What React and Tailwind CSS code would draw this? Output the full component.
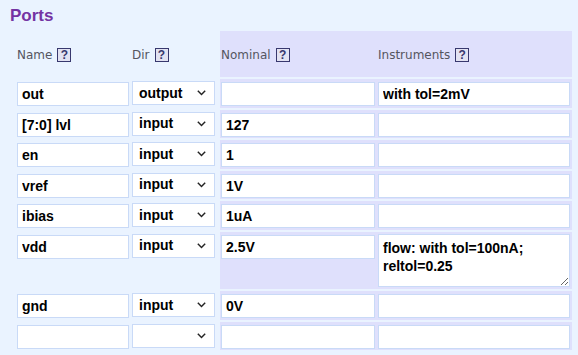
import React from "react";

const ports = [
  { name: "out", dir: "output", nominal: "", inst: "with tol=2mV" },
  { name: "[7:0] lvl", dir: "input", nominal: "127", inst: "" },
  { name: "en", dir: "input", nominal: "1", inst: "" },
  { name: "vref", dir: "input", nominal: "1V", inst: "" },
  { name: "ibias", dir: "input", nominal: "1uA", inst: "" },
  { name: "vdd", dir: "input", nominal: "2.5V", inst: "flow: with tol=100nA;\nreltol=0.25", tall: true },
  { name: "gnd", dir: "input", nominal: "0V", inst: "" },
  { name: "", dir: "", nominal: "", inst: "" },
];

const field =
  "h-[24px] border border-[#c9daf7] bg-white px-[4px] text-[14px] font-bold text-black outline-none font-['Liberation_Sans',Arial,sans-serif]";

function Help() {
  return (
    <span className="ml-[5px] inline-flex h-[14px] w-[14px] items-center justify-center border-[1.5px] border-[#38386e] bg-[#e2e2f2] text-[12px] leading-none font-bold text-[#38386e] font-['Liberation_Sans',Arial,sans-serif]">
      ?
    </span>
  );
}

function Label({ text }) {
  return (
    <span className="flex items-center pt-[1px] text-[12px] text-[#55555f] font-['DejaVu_Sans',Verdana,sans-serif]">
      {text}
      <Help />
    </span>
  );
}

function Chevron() {
  return (
    <svg width="9" height="6" viewBox="0 0 9 6" fill="none">
      <path d="M0.8 0.8 L4.5 4.6 L8.2 0.8" stroke="#222" strokeWidth="1.4" />
    </svg>
  );
}

export default function App() {
  return (
    <div className="h-[355px] w-[578px] overflow-hidden bg-[#eaf3ff]">
      <h2 className="h-[31px] pl-[10px] pt-[6px] text-[17px] leading-[20px] font-bold text-[#7433a3] font-['Liberation_Sans',Arial,sans-serif]">
        Ports
      </h2>
      <div className="flex flex-col gap-[2px] pl-[16px]">
        <div className="flex h-[46px]">
          <div className="flex w-[115px] items-center pl-px">
            <Label text="Name" />
          </div>
          <div className="flex w-[89px] items-center pl-px">
            <Label text="Dir" />
          </div>
          <div className="flex w-[157px] items-center bg-[#dfe0fc] pl-px">
            <Label text="Nominal" />
          </div>
          <div className="flex w-[195px] items-center bg-[#dfe0fc] pl-px">
            <Label text="Instruments" />
          </div>
        </div>

        {ports.map((p, i) => (
          <div key={i} className={`flex ${p.tall ? "h-[57.5px]" : "h-[28.5px]"}`}>
            <div className="w-[115px] pl-px pt-[2px]">
              <input readOnly value={p.name} className={`${field} w-[112px]`} />
            </div>
            <div className="w-[89px] pl-px pt-[2px]">
              <div className="flex h-[24px] w-[83px] items-center justify-between border border-[#c9daf7] bg-white pl-[6px] pr-[8px] text-[14px] font-bold text-black font-['Liberation_Sans',Arial,sans-serif]">
                <span>{p.dir}</span>
                <Chevron />
              </div>
            </div>
            <div className="w-[157px] bg-[#dfe0fc] pl-px pt-[2px]">
              <input readOnly value={p.nominal} className={`${field} w-[154px]`} />
            </div>
            <div className="w-[195px] bg-[#dfe0fc] pl-px pt-[2px]">
              {p.tall ? (
                <textarea
                  readOnly
                  value={p.inst}
                  className="block h-[53px] w-[192px] border border-[#c9daf7] bg-white px-[4px] pt-[4px] text-[14px] leading-[18px] font-bold text-black outline-none font-['Liberation_Sans',Arial,sans-serif]"
                />
              ) : (
                <input readOnly value={p.inst} className={`${field} w-[192px]`} />
              )}
            </div>
          </div>
        ))}
      </div>
    </div>
  );
}
